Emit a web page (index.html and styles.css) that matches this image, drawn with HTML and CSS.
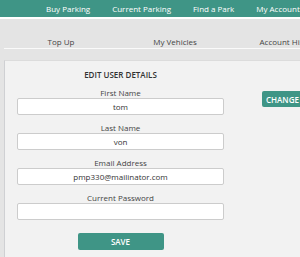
FILE: index.html
```html
<!DOCTYPE html>
<html lang="en">
<head>
  <meta charset="UTF-8">
  <meta name="viewport" content="width=device-width, initial-scale=1.0">
  <title>My Account</title>
  <link rel="stylesheet" href="styles.css">
</head>
<body>
  <div class="page">
    <nav class="topnav">
      <a class="topnav-item" href="#">Buy Parking</a>
      <a class="topnav-item" href="#">Current Parking</a>
      <a class="topnav-item" href="#">Find a Park</a>
      <a class="topnav-item" href="#">My Account</a>
    </nav>

    <div class="tabs">
      <a class="tab" href="#">Top Up</a>
      <a class="tab" href="#">My Vehicles</a>
      <a class="tab" href="#">Account History</a>
    </div>

    <section class="card">
      <form class="details">
        <h2 class="details-title">EDIT USER DETAILS</h2>

        <label class="field">
          <span class="field-label">First Name</span>
          <input class="field-input" type="text" value="tom">
        </label>

        <label class="field">
          <span class="field-label">Last Name</span>
          <input class="field-input" type="text" value="von">
        </label>

        <label class="field">
          <span class="field-label">Email Address</span>
          <input class="field-input" type="text" value="pmp330@mailinator.com">
        </label>

        <label class="field">
          <span class="field-label">Current Password</span>
          <input class="field-input" type="password">
        </label>

        <button class="btn btn-save" type="button">SAVE</button>
      </form>

      <div class="side">
        <button class="btn btn-change" type="button">CHANGE PASSWORD</button>
      </div>
    </section>
  </div>
</body>
</html>
```

FILE: styles.css
```css
:root {
  --teal: #3f9586;
  --page: #e4e4e4;
  --card: #f2f2f2;
  --text: #444;
}

* {
  margin: 0;
  padding: 0;
  box-sizing: border-box;
}

html, body {
  overflow: hidden;
}

body {
  font-family: "Open Sans", "Liberation Sans", sans-serif;
  font-size: 8px;
  color: var(--text);
  background: var(--page);
}

.page {
  width: 380px;
}

/* Top navigation */
.topnav {
  display: flex;
  height: 19px;
  padding-left: 35px;
  background: var(--teal);
  border-bottom: 2px solid #fff;
}

.topnav-item {
  padding: 0 11px;
  line-height: 17px;
  color: #fff;
  text-decoration: none;
  white-space: nowrap;
}

/* Sub tabs */
.tabs {
  display: flex;
  margin-left: 4px;
  border-bottom: 1px solid #fafafa;
}

.tab {
  width: 114px;
  padding-top: 17px;
  line-height: 12px;
  text-align: center;
  color: var(--text);
  text-decoration: none;
  white-space: nowrap;
}

/* Card */
.card {
  display: flex;
  margin: 11px 0 0 4px;
  padding-bottom: 20px;
  background: var(--card);
  border-top: 1px solid #dcdcdc;
  border-left: 1px solid #cfd0d3;
}

.details {
  display: flex;
  flex-direction: column;
  align-items: center;
  width: 231px;
  padding: 8px 12px 0;
}

.details-title {
  font-size: 8px;
  font-weight: 600;
  line-height: 12px;
  color: #333;
  margin-bottom: 7px;
}

.field {
  display: flex;
  flex-direction: column;
  align-items: center;
  width: 100%;
  margin-bottom: 8px;
}

.field-label {
  line-height: 10px;
}

.field-input {
  width: 100%;
  height: 17px;
  border: 1px solid #ccc;
  border-radius: 2px;
  background: #fff;
  font: inherit;
  color: #333;
  text-align: center;
}

.btn {
  border: none;
  border-radius: 2px;
  background: var(--teal);
  color: #fff;
  font-family: inherit;
  font-size: 8px;
  font-weight: 600;
  white-space: nowrap;
}

.btn-save {
  width: 86px;
  height: 17px;
  margin-top: 5px;
}

.side {
  padding: 30px 0 0 26px;
}

.btn-change {
  height: 16px;
  padding: 0 4px;
}
```
